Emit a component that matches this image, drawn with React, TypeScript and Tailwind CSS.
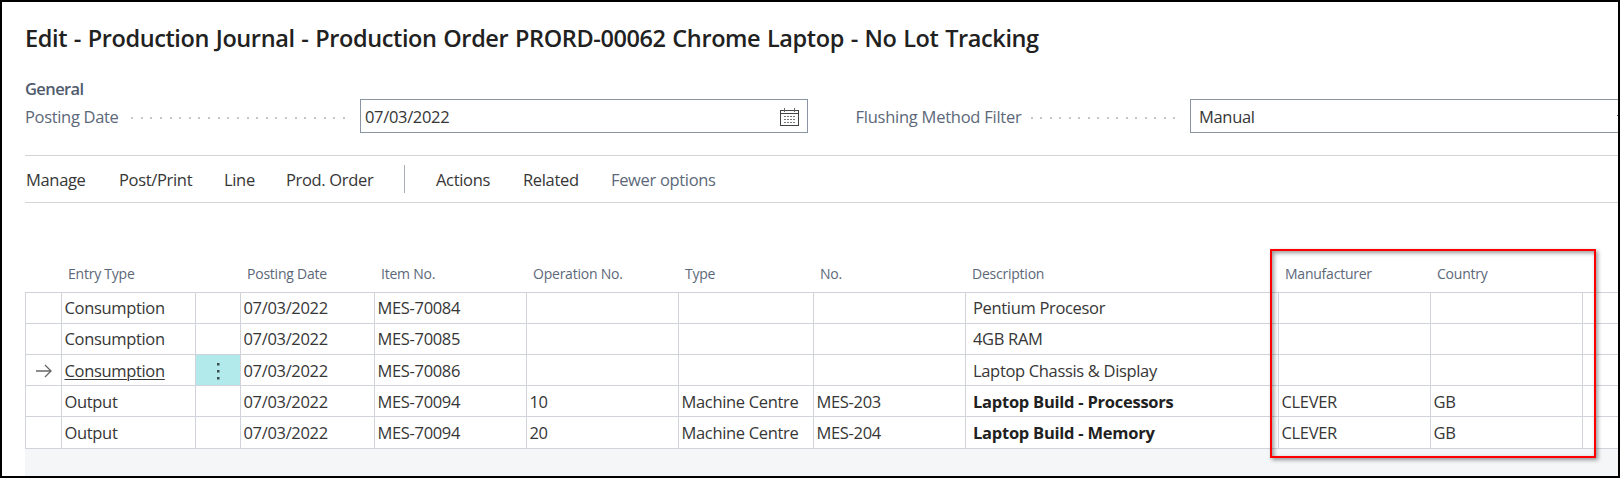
import clsx from 'clsx';

type Line = {
  entryType: string;
  postingDate: string;
  itemNo: string;
  operationNo?: string;
  type?: string;
  no?: string;
  description: string;
  manufacturer?: string;
  country?: string;
  selected?: boolean;
};

const lines: Line[] = [
  { entryType: 'Consumption', postingDate: '07/03/2022', itemNo: 'MES-70084', description: 'Pentium Procesor' },
  { entryType: 'Consumption', postingDate: '07/03/2022', itemNo: 'MES-70085', description: '4GB RAM' },
  { entryType: 'Consumption', postingDate: '07/03/2022', itemNo: 'MES-70086', description: 'Laptop Chassis & Display', selected: true },
  { entryType: 'Output', postingDate: '07/03/2022', itemNo: 'MES-70094', operationNo: '10', type: 'Machine Centre', no: 'MES-203', description: 'Laptop Build - Processors', manufacturer: 'CLEVER', country: 'GB' },
  { entryType: 'Output', postingDate: '07/03/2022', itemNo: 'MES-70094', operationNo: '20', type: 'Machine Centre', no: 'MES-204', description: 'Laptop Build - Memory', manufacturer: 'CLEVER', country: 'GB' },
];

const columns = 'grid grid-cols-[36px_134px_45px_134px_152px_152px_135px_152px_313px_152px_152px_36px]';
const cell = 'flex items-center border-l border-[#d0d3d9] pl-[2.5px]';

function CalendarIcon() {
  return (
    <svg className="h-[18px] w-[19px]" viewBox="0 0 19 18" fill="none" stroke="#444" shapeRendering="crispEdges">
      <path d="M.5 2.5h18v15H.5zM.5 5.5h18" />
      <path d="M4.5 0v4M14.5 0v4" stroke="#666" />
      <path d="M4 8.5h12M4 11.5h12M4 14.5h12" stroke="#777" strokeDasharray="2 1" />
    </svg>
  );
}

function ArrowIcon() {
  return (
    <svg className="h-[14px] w-4" viewBox="0 0 16 14" fill="none" stroke="#666" strokeWidth="1.3">
      <path d="M0 7h15M9 1l6 6-6 6" />
    </svg>
  );
}

function MoreIcon() {
  return (
    <svg className="h-[17px] w-[3px]" viewBox="0 0 3 17" fill="#3b4a4c">
      <path d="M0 0h2.5v2.5H0zM0 7h2.5v2.5H0zM0 14h2.5v2.5H0z" />
    </svg>
  );
}

function DotLeader({ className, count }: { className: string; count: number }) {
  return (
    <span className={clsx('mt-0.5 flex justify-between', className)}>
      {Array.from({ length: count }, (_, i) => (
        <span key={i} className="size-0.5 bg-[#c6c6c6]" />
      ))}
    </span>
  );
}

function JournalRow({ line }: { line: Line }) {
  return (
    <div
      className={clsx(
        columns,
        'h-[31px] grid-rows-[100%] border-t border-[#d0d3d9] last:h-8',
        (line.selected || line.operationNo) && '*:pt-0.5',
      )}
    >
      <div className="flex items-center border-l border-[#d0d3d9] pl-2.5">{line.selected && <ArrowIcon />}</div>
      <div className={cell}>
        <span className={clsx(line.selected && 'underline decoration-1 underline-offset-2')}>{line.entryType}</span>
      </div>
      <div className={clsx('flex items-center justify-center border-l border-[#d0d3d9]', line.selected && 'bg-[#b2e9eb]')}>
        {line.selected && <MoreIcon />}
      </div>
      <div className={cell}>{line.postingDate}</div>
      <div className={cell}>{line.itemNo}</div>
      <div className={cell}>{line.operationNo}</div>
      <div className={cell}>{line.type}</div>
      <div className={cell}>{line.no}</div>
      <div className={clsx('flex items-center border-l border-[#d0d3d9] pl-[7px]', line.operationNo && 'font-bold tracking-[-0.25px] text-[#212121]')}>
        {line.description}
      </div>
      <div className={cell}>{line.manufacturer}</div>
      <div className={cell}>{line.country}</div>
      <div className={cell} />
    </div>
  );
}

export default function App() {
  return (
    <div className="relative flex h-[478px] w-[1620px] flex-col overflow-hidden border-2 border-black bg-white pl-[23px] font-['Open_Sans','Noto_Sans',sans-serif] text-[16.5px] tracking-[-0.33px] whitespace-nowrap text-[#363636]">
      <h1 className="mt-5 h-8 text-[23.5px] leading-8 font-semibold tracking-[-0.39px] text-[#212121] [word-spacing:1px]">
        Edit - Production Journal - Production Order PRORD-00062 Chrome Laptop - No Lot Tracking
      </h1>

      <h2 className="mt-[25px] h-5 leading-5 font-semibold tracking-[-0.6px] text-[#505c6d]">General</h2>
      <div className="flex h-[34px] items-center">
        <div className="flex w-[335px] items-center pt-0.5 text-[#5c6879]">
          <span className="w-[106px]">Posting Date</span>
          <DotLeader className="w-[214px]" count={23} />
        </div>
        <div className="flex h-[34px] w-[448px] items-center justify-between border border-[#8a94a3] pt-0.5 pr-2 pl-1">
          <span>07/03/2022</span>
          <CalendarIcon />
        </div>
        <div className="ml-[47.5px] flex w-[334.5px] items-center pt-0.5 text-[#5c6879]">
          <span className="w-[175px] tracking-[-0.25px]">Flushing Method Filter</span>
          <DotLeader className="w-[145px]" count={16} />
        </div>
        <div className="flex h-[34px] flex-1 items-center justify-between border-y border-l border-[#8a94a3] pt-0.5 pl-2">
          <span>Manual</span>
          <span className="mb-1 h-px w-px bg-[#666]" />
        </div>
      </div>

      <nav className="mt-[22px] flex h-12 items-center border-y border-[#d4d4d4] pt-0.5 pl-px">
        <span className="w-[93px]">Manage</span>
        <span className="w-[105px]">Post/Print</span>
        <span className="w-[62px]">Line</span>
        <span className="w-[118px]">Prod. Order</span>
        <span className="mb-0.5 h-7 w-px bg-[#a8adb5]" />
        <span className="ml-[31px] w-[87px]">Actions</span>
        <span className="w-[88px]">Related</span>
        <span className="text-[#5c6879]">Fewer options</span>
      </nav>

      <section className="mt-[57px] flex flex-1 flex-col bg-[#f5f6f8]">
        <div className={clsx(columns, 'h-8 bg-white text-sm leading-[27px] tracking-[-0.23px] text-[#5c6879] *:pl-[7px]')}>
          <span />
          <span>Entry Type</span>
          <span />
          <span>Posting Date</span>
          <span>Item No.</span>
          <span>Operation No.</span>
          <span>Type</span>
          <span>No.</span>
          <span>Description</span>
          <span>Manufacturer</span>
          <span>Country</span>
        </div>
        <div className="border-b border-[#d0d3d9] bg-white">
          {lines.map((line, index) => (
            <JournalRow key={index} line={line} />
          ))}
        </div>
      </section>

      {/* Highlight over the manufacturer and country columns */}
      <div className="absolute top-[247px] left-[1268px] h-[209px] w-[326px] border-2 border-[#fe0000] shadow-[2px_2px_4px_rgba(0,0,0,0.4),inset_2px_2px_4px_rgba(0,0,0,0.4)]" />
    </div>
  );
}
